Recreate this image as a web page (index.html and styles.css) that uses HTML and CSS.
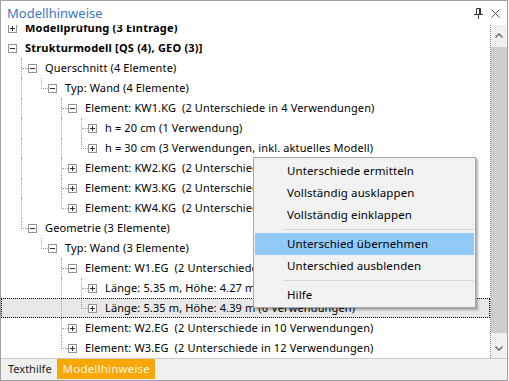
FILE: index.html
```html
<!DOCTYPE html>
<html lang="de">
<head>
  <meta charset="UTF-8">
  <title>Modellhinweise</title>
  <link rel="stylesheet" href="styles.css">
</head>
<body>
  <div class="window">
    <header class="titlebar">
      <span class="title">Modellhinweise</span>
      <span class="tools">
        <svg class="pin" width="9" height="11" viewBox="0 0 9 11"><path d="M2.5 0.5h4v6h-4z M5.5 0.5v6 M0 6.5h9 M4.5 7v4" stroke="#333" fill="none"/></svg>
        <svg class="close" width="9" height="9" viewBox="0 0 9 9"><path d="M0.5 0.5l8 8 M8.5 0.5l-8 8" stroke="#555" fill="none"/></svg>
      </span>
    </header>

    <div class="body">
      <div class="viewport">
        <div class="tree">
          <div class="row"><span class="link"></span><span class="exp plus"></span><span class="label strong">Modellprüfung (3 Einträge)</span></div>
          <div class="row"><span class="link"></span><span class="exp"></span><span class="label strong">Strukturmodell [QS (4), GEO (3)]</span></div>
          <div class="row"><span class="i"></span><span class="link tee"></span><span class="exp"></span><span class="label">Querschnitt (4 Elemente)</span></div>
          <div class="row"><span class="i"></span><span class="i pipe"></span><span class="link end"></span><span class="exp"></span><span class="label">Typ: Wand (4 Elemente)</span></div>
          <div class="row"><span class="i"></span><span class="i pipe"></span><span class="i"></span><span class="link tee"></span><span class="exp"></span><span class="label">Element: KW1.KG  (2 Unterschiede in 4 Verwendungen)</span></div>
          <div class="row"><span class="i"></span><span class="i pipe"></span><span class="i"></span><span class="i pipe"></span><span class="link tee"></span><span class="exp plus"></span><span class="label">h = 20 cm (1 Verwendung)</span></div>
          <div class="row"><span class="i"></span><span class="i pipe"></span><span class="i"></span><span class="i pipe"></span><span class="link end"></span><span class="exp plus"></span><span class="label">h = 30 cm (3 Verwendungen, inkl. aktuelles Modell)</span></div>
          <div class="row"><span class="i"></span><span class="i pipe"></span><span class="i"></span><span class="link tee"></span><span class="exp plus"></span><span class="label">Element: KW2.KG  (2 Unterschiede in 3 Verwendungen)</span></div>
          <div class="row"><span class="i"></span><span class="i pipe"></span><span class="i"></span><span class="link tee"></span><span class="exp plus"></span><span class="label">Element: KW3.KG  (2 Unterschiede in 5 Verwendungen)</span></div>
          <div class="row"><span class="i"></span><span class="i pipe"></span><span class="i"></span><span class="link end"></span><span class="exp plus"></span><span class="label">Element: KW4.KG  (2 Unterschiede in 2 Verwendungen)</span></div>
          <div class="row"><span class="i"></span><span class="link end"></span><span class="exp"></span><span class="label">Geometrie (3 Elemente)</span></div>
          <div class="row"><span class="i"></span><span class="i"></span><span class="link end"></span><span class="exp"></span><span class="label">Typ: Wand (3 Elemente)</span></div>
          <div class="row"><span class="i"></span><span class="i"></span><span class="i"></span><span class="link tee"></span><span class="exp"></span><span class="label">Element: W1.EG  (2 Unterschiede in 8 Verwendungen)</span></div>
          <div class="row"><span class="i"></span><span class="i"></span><span class="i"></span><span class="i pipe"></span><span class="link tee"></span><span class="exp plus"></span><span class="label">Länge: 5.35 m, Höhe: 4.27 m (2 Verwendungen)</span></div>
          <div class="row selected"><span class="i"></span><span class="i"></span><span class="i"></span><span class="i pipe"></span><span class="link end"></span><span class="exp plus"></span><span class="label">Länge: 5.35 m, Höhe: 4.39 m (6 Verwendungen)</span></div>
          <div class="row"><span class="i"></span><span class="i"></span><span class="i"></span><span class="link tee"></span><span class="exp plus"></span><span class="label">Element: W2.EG  (2 Unterschiede in 10 Verwendungen)</span></div>
          <div class="row"><span class="i"></span><span class="i"></span><span class="i"></span><span class="link end"></span><span class="exp plus"></span><span class="label">Element: W3.EG  (2 Unterschiede in 12 Verwendungen)</span></div>
        </div>
      </div>

      <div class="scrollbar">
        <span class="scroll-btn"><svg width="8" height="5" viewBox="0 0 8 5"><path d="M0.5 4.5l3.5-3.5 3.5 3.5" stroke="#606060" stroke-width="1.3" fill="none"/></svg></span>
        <div class="track"><div class="thumb"></div></div>
        <span class="scroll-btn"><svg width="8" height="5" viewBox="0 0 8 5"><path d="M0.5 0.5l3.5 3.5 3.5-3.5" stroke="#606060" stroke-width="1.3" fill="none"/></svg></span>
      </div>
    </div>

    <footer class="tabs">
      <span class="tab">Texthilfe</span>
      <span class="tab active">Modellhinweise</span>
    </footer>

    <div class="context-menu">
      <div class="menu-item">Unterschiede ermitteln</div>
      <div class="menu-item">Vollständig ausklappen</div>
      <div class="menu-item">Vollständig einklappen</div>
      <div class="menu-sep"></div>
      <div class="menu-item hover">Unterschied übernehmen</div>
      <div class="menu-item">Unterschied ausblenden</div>
      <div class="menu-sep"></div>
      <div class="menu-item">Hilfe</div>
    </div>
  </div>
</body>
</html>
```

FILE: styles.css
```css
* {
  box-sizing: border-box;
}
body {
  margin: 0;
  font-family: "Noto Sans", sans-serif;
  font-size: 11px;
  color: #000;
  background: #fff;
}
.window {
  position: relative;
  width: 508px;
  height: 381px;
  border: 1px solid #a0a0a0;
  display: flex;
  flex-direction: column;
  background: #fff;
}

/* title */
.titlebar {
  height: 24px;
  flex: none;
  display: flex;
  align-items: center;
  justify-content: space-between;
  padding: 0 7px 0 6px;
}
.title {
  font-size: 13px;
  color: #3d78c4;
}
.tools {
  display: flex;
  align-items: center;
  gap: 8px;
}

/* tree */
.body {
  height: 333px;
  flex: none;
  display: flex;
}
.viewport {
  width: 490px;
  overflow: hidden;
  border-right: 1px dotted #808080;
}
.tree {
  margin-top: -7px;
  letter-spacing: 0.13px;
}
.row {
  height: 20px;
  display: flex;
  align-items: center;
  white-space: pre;
}
.row.selected {
  background: #e8e8e8;
  outline: 1px dotted #000;
  outline-offset: -1px;
}
.i {
  width: 20px;
  height: 20px;
  flex: none;
}
.i.pipe {
  border-left: 1px dotted #a0a0a0;
}
.link {
  width: 7px;
  height: 20px;
  flex: none;
}
.link.tee {
  border-left: 1px dotted #a0a0a0;
}
.link.tee::before,
.link.end::before {
  content: '';
  display: block;
  height: 10px;
  border-bottom: 1px dotted #a0a0a0;
}
.link.end::before {
  border-left: 1px dotted #a0a0a0;
}
.exp {
  width: 9px;
  height: 9px;
  flex: none;
  border: 1px solid #939393;
  background: #fff;
  display: grid;
  place-items: center;
}
.exp::before,
.exp::after {
  content: '';
  grid-area: 1 / 1;
  background: #2c2c3c;
}
.exp::before {
  width: 5px;
  height: 1px;
}
.exp.plus::after {
  width: 1px;
  height: 5px;
}
.label {
  margin-left: 8px;
  line-height: 20px;
}
.label.strong {
  font-weight: bold;
  letter-spacing: 0.2px;
}

/* scrollbar */
.scrollbar {
  width: 16px;
  display: flex;
  flex-direction: column;
  background: #f0f0f0;
}
.scroll-btn {
  height: 20px;
  display: flex;
  align-items: center;
  justify-content: center;
}
.track {
  flex: 1;
  padding-top: 2px;
}
.thumb {
  height: 286px;
  background: #cdcdcd;
}

/* tabs */
.tabs {
  flex: 1;
  display: flex;
  padding-left: 2px;
  border-top: 1px solid #c8c8c8;
  background: #f0f0f0;
}
.tab {
  height: 20px;
  line-height: 20px;
  padding: 0 5px;
  font-size: 11px;
  color: #1e1e1e;
}
.tab.active {
  padding: 0 5px 0 6px;
  font-size: 11.5px;
  background: #f7a70a;
  color: #fff4dc;
  letter-spacing: 0.2px;
}

/* context menu */
.context-menu {
  position: absolute;
  left: 252px;
  top: 156px;
  width: 223px;
  padding: 2px 1px 1px;
  background: #f2f2f2;
  border: 1px solid #a8a8a8;
  box-shadow: 2px 2px 2px rgba(0, 0, 0, 0.3);
}
.menu-item {
  height: 22px;
  line-height: 22px;
  padding-left: 32px;
  font-size: 11.5px;
  letter-spacing: 0.1px;
}
.menu-item.hover {
  background: #91c9f7;
}
.menu-sep {
  height: 1px;
  margin: 3px 0 3px 28px;
  background: #d7d7d7;
}
```
